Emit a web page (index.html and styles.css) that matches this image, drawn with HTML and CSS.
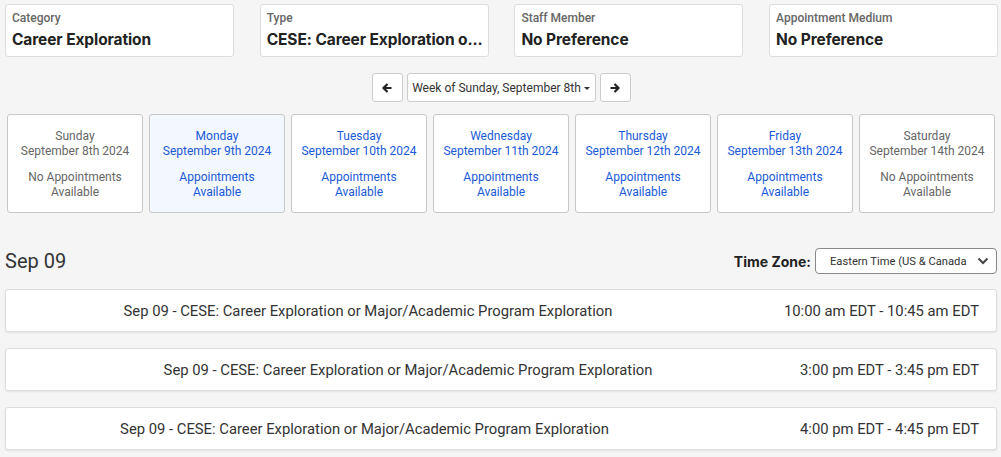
FILE: index.html
```html
<!DOCTYPE html>
<html>
<head>
<meta charset="utf-8">
<link rel="stylesheet" href="styles.css">
</head>
<body>
<div class="page">
  <div class="filters">
    <div class="filter"><div class="f-label">Category</div><div class="f-value">Career Exploration</div></div>
    <div class="filter"><div class="f-label">Type</div><div class="f-value">CESE: Career Exploration o...</div></div>
    <div class="filter"><div class="f-label">Staff Member</div><div class="f-value">No Preference</div></div>
    <div class="filter"><div class="f-label">Appointment Medium</div><div class="f-value">No Preference</div></div>
  </div>

  <div class="weeknav">
    <button class="nbtn arrow"><svg width="12" height="12" viewBox="0 0 12 12"><path d="M10.5 6H3M6.5 2L2.5 6l4 4" fill="none" stroke="#222" stroke-width="2.2" stroke-linejoin="miter"/></svg></button>
    <button class="nbtn week">Week of Sunday, September 8th <span class="caret"></span></button>
    <button class="nbtn arrow"><svg width="12" height="12" viewBox="0 0 12 12"><path d="M1.5 6H9M5.5 2l4 4-4 4" fill="none" stroke="#222" stroke-width="2.2" stroke-linejoin="miter"/></svg></button>
  </div>

  <div class="days">
    <div class="day none"><div>Sunday</div><div>September 8th 2024</div><div class="avail">No Appointments<br>Available</div></div>
    <div class="day open sel"><div>Monday</div><div>September 9th 2024</div><div class="avail">Appointments<br>Available</div></div>
    <div class="day open"><div>Tuesday</div><div>September 10th 2024</div><div class="avail">Appointments<br>Available</div></div>
    <div class="day open"><div>Wednesday</div><div>September 11th 2024</div><div class="avail">Appointments<br>Available</div></div>
    <div class="day open"><div>Thursday</div><div>September 12th 2024</div><div class="avail">Appointments<br>Available</div></div>
    <div class="day open"><div>Friday</div><div>September 13th 2024</div><div class="avail">Appointments<br>Available</div></div>
    <div class="day none"><div>Saturday</div><div>September 14th 2024</div><div class="avail">No Appointments<br>Available</div></div>
  </div>

  <div class="dayhead">
    <h2 class="date">Sep 09</h2>
    <div class="tz">
      <span class="tz-label">Time Zone:</span>
      <div class="tz-select"><span class="tz-text">Eastern Time (US &amp; Canada</span><svg width="12" height="8" viewBox="0 0 12 8"><path d="M1.5 1.5L6 6l4.5-4.5" fill="none" stroke="#444" stroke-width="2"/></svg></div>
    </div>
  </div>

  <div class="slots">
    <div class="slot s1"><div class="s-title">Sep 09 - CESE: Career Exploration or Major/Academic Program Exploration</div><div class="s-time">10:00 am EDT - 10:45 am EDT</div></div>
    <div class="slot s2"><div class="s-title">Sep 09 - CESE: Career Exploration or Major/Academic Program Exploration</div><div class="s-time">3:00 pm EDT - 3:45 pm EDT</div></div>
    <div class="slot s3"><div class="s-title">Sep 09 - CESE: Career Exploration or Major/Academic Program Exploration</div><div class="s-time">4:00 pm EDT - 4:45 pm EDT</div></div>
  </div>
</div>
</body>
</html>
```

FILE: styles.css
```css
* { box-sizing: border-box; }
html, body { margin: 0; padding: 0; }
body {
  background: #f5f5f5;
  font-family: "Roboto", "Liberation Sans", Arial, sans-serif;
  color: #222;
  width: 1001px;
  height: 457px;
  overflow: hidden;
}
.page { padding: 4px 4px 0 5px; }

.filters {
  display: grid;
  grid-template-columns: repeat(4, 229px);
  column-gap: 25.7px;
}
.filter {
  background: #fff;
  border: 1px solid #ddd;
  border-radius: 3px;
  height: 53px;
  padding: 6px 6px 0 6px;
}
.f-label { font-size: 12px; font-weight: 500; color: #666; line-height: 14px; }
.f-value { font-family: "Inter", "Liberation Sans", sans-serif; font-size: 15.5px; font-weight: 700; color: #222; line-height: 20px; margin-top: 5px; letter-spacing: -0.1px; white-space: nowrap; }

.weeknav {
  display: flex;
  justify-content: center;
  gap: 4px;
  margin-top: 16px;
}
.nbtn {
  height: 29px;
  background: #fff;
  border: 1px solid #ccc;
  border-radius: 3px;
  font-family: inherit;
  font-size: 12px;
  color: #333;
  display: flex;
  align-items: center;
  justify-content: center;
  padding: 0;
}
.nbtn.arrow { width: 31px; }
.nbtn.week { width: 189px; }
.caret {
  display: inline-block;
  width: 0; height: 0;
  border-left: 3px solid transparent;
  border-right: 3px solid transparent;
  border-top: 3px solid #333;
  margin-left: 3px;
  margin-top: 2px;
}

.days {
  display: grid;
  grid-template-columns: repeat(7, 136px);
  column-gap: 6px;
  margin-top: 12px;
  padding-left: 2px;
}
.day {
  background: #fff;
  border: 1px solid #c8c8c8;
  border-radius: 3px;
  height: 99px;
  padding-top: 14px;
  text-align: center;
  font-size: 12px;
  line-height: 15px;
}
.day.none { color: #666; }
.day.open { color: #1a5ad8; }
.day.sel { background: #f3f7fe; }
.avail { margin-top: 11px; }

.dayhead {
  display: flex;
  justify-content: space-between;
  align-items: center;
  margin-top: 35px;
}
.date { font-size: 20px; font-weight: 400; margin: 0; color: #333; line-height: 26px; }
.tz { display: flex; align-items: center; gap: 4px; }
.tz-label { font-family: "Inter", "Liberation Sans", sans-serif; font-size: 14px; font-weight: 700; color: #222; }
.tz-select {
  width: 182px;
  height: 26px;
  background: #fff;
  border: 1px solid #888;
  border-radius: 4px;
  display: flex;
  align-items: center;
  justify-content: space-between;
  padding: 0 7px 0 14px;
  font-size: 11.2px;
  color: #333;
}
.tz-text { white-space: nowrap; }

.slots { display: flex; flex-direction: column; gap: 16px; margin-top: 15px; }
.slot {
  background: #fff;
  border: 1px solid #ddd;
  border-radius: 3px;
  height: 43px;
  box-shadow: 0 1px 2px rgba(0,0,0,0.08);
  display: flex;
  align-items: center;
  font-size: 14.8px;
  color: #333;
  padding-right: 17px;
}
.s-title { flex: 1; text-align: center; }
.s-time { white-space: nowrap; }
.s1 .s-title { padding-right: 54px; }
.s2 .s-title { padding-left: 10px; }
.s3 .s-title { padding-right: 77px; }
```
